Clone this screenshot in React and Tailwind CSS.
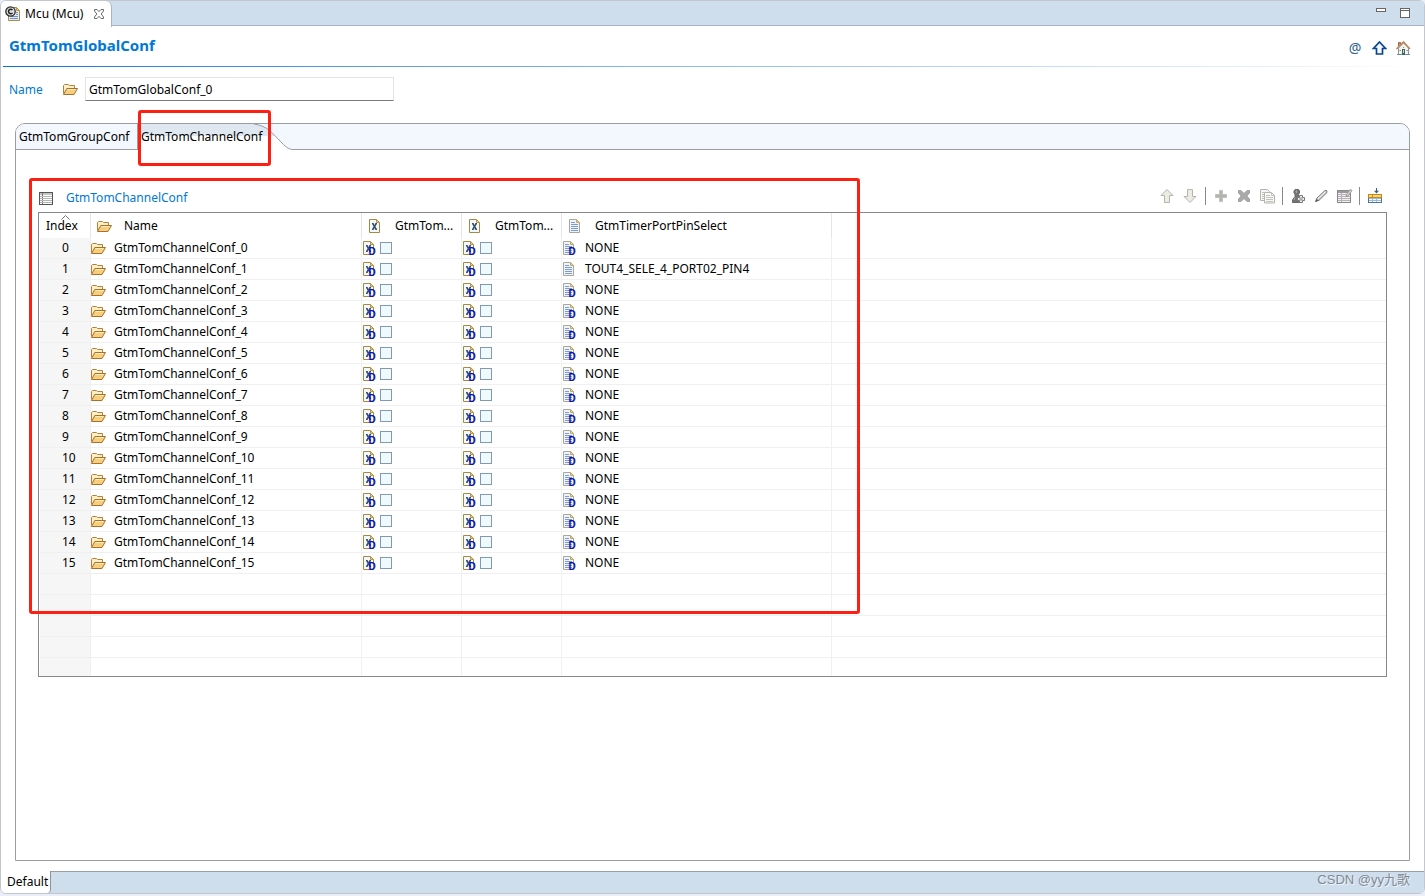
import React, { useState } from "react";

const Svg = ({ children }) => (
  <svg viewBox="0 0 16 16" className="size-4 shrink-0 overflow-visible" aria-hidden="true" fill="none">
    {children}
  </svg>
);

const FolderIcon = () => (
  <Svg>
    <path d="M0.5 12.500V4.500L1.500 3.500H5.500L6.500 4.500H11.500V7" fill="#fdf0c4" stroke="#b5803c" />
    <path d="M0.5 13.500L3.800 7.500H14.500L11 13.500Z" fill="#f6ce7c" stroke="#a9702c" />
    <path d="M4.500 8.500H12.500" stroke="#fdeec0" />
  </Svg>
);

const Badge = () => (
  <text x="6.500" y="15" fontSize="10" fontWeight="700" fontFamily="Liberation Sans, sans-serif" fill="#0a12b4">
    D
  </text>
);

const BoolIcon = ({ badge = false }) => (
  <Svg>
    <path d="M1.5 1.5H8.5L11.500 4.5V14.5H1.5Z" fill="#f3f8fd" stroke="#a8893f" />
    <path d="M8.5 1.5V4.5H11.500Z" fill="#e9c983" stroke="#b9964a" />
    <path d="M4.700 5.500L8.300 11.500M8.300 5.500L4.700 11.500" stroke="#34506e" strokeWidth="1.500" />
    <path d="M4 5.500H5.500M7.500 5.500H9M4 11.500H5.500M7.500 11.500H9" stroke="#34506e" />
    {badge && <Badge />}
  </Svg>
);

const DocIcon = ({ badge = false }) => (
  <Svg>
    <path d="M1.5 1.5H8.5L11.500 4.5V14.5H1.5Z" fill="#eef4fc" stroke="#a9a898" />
    <path d="M8.5 1.5V4.5H11.500Z" fill="#e9cf98" stroke="#c5a76b" />
    <path d="M3 4.500H7M3 6.500H10M3 8.500H10M3 10.500H10M3 12.500H10" stroke="#7f9cc9" />
    {badge && <Badge />}
  </Svg>
);

const EditorIcon = () => (
  <Svg>
    <path d="M4.5 1.5H11.5L14.5 4.5V14.5H3.5V9" fill="#e4edf9" stroke="#b08a3c" />
    <path d="M11.5 1.5V4.5H14.5Z" fill="#e9c983" stroke="#b9964a" />
    <path d="M5 12.5H13M6 10.5H13M11 8.5H13M11 6.5H13" stroke="#6d8fc6" />
    <circle cx="5.500" cy="5.500" r="4.700" fill="#dcdcdc" stroke="#2b2b2b" strokeWidth="1.300" />
    <path d="M7.500 4C5.800 2.400 3.500 3.600 3.500 5.500C3.500 7.400 5.800 8.600 7.500 7" stroke="#222" strokeWidth="1.500" />
  </Svg>
);

const CloseIcon = () => (
  <svg viewBox="0 0 12 12" className="size-3" fill="none" aria-hidden="true">
    <path d="M1.5 1.5H4L6 3.7L8 1.5H10.5V3L8.2 6L10.5 9V10.5H8L6 8.3L4 10.5H1.5V9L3.8 6L1.5 3Z" stroke="#6a6a6a" />
  </svg>
);

const HomeIcon = () => (
  <Svg>
    <path d="M3.5 8V14.5H13.5V8L8.5 3Z" fill="#f6f4e4" stroke="#8698a8" />
    <path d="M3.5 6V2.5H5.5V4" fill="#c98b62" stroke="#9d6a45" />
    <path d="M1.5 9L8.5 2L15 9" stroke="#b98a62" strokeWidth="1.6" />
    <rect x="7" y="9" width="3" height="6" fill="#35608c" />
    <path d="M8 7.5H9M4.5 10.5H6M11.5 10.5H13" stroke="#6b93b8" />
    <path d="M8.5 10V13" stroke="#e9dd5b" />
    <path d="M2 14.5H6M11 14.5H15" stroke="#6b8f7c" />
  </Svg>
);

const UpIcon = () => (
  <Svg>
    <path d="M8.500 2L14.500 8.500H11.500V14H5.500V8.500H2.500Z" fill="#f4f9ff" stroke="#0a4591" strokeWidth="1.700" />
  </Svg>
);

const ListIcon = () => (
  <Svg>
    <rect x="1.5" y="2.5" width="13" height="12" fill="#fff" stroke="#555" />
    <path d="M2 4H14" stroke="#8a8a8a" />
    <path d="M4.5 3V14" stroke="#777" />
    <path d="M2 6.5H14M2 8.5H14M2 10.5H14M2 12.5H14" stroke="#b5b5b5" />
  </Svg>
);

const ArrowUp = () => (
  <Svg>
    <path d="M8 1.5L14 7.5H10.5V14.5H5.5V7.5H2Z" fill="#ecebe4" stroke="#b7b4aa" strokeLinejoin="round" />
  </Svg>
);
const ArrowDown = () => (
  <Svg>
    <path d="M8 14.5L14 8.5H10.5V1.5H5.5V8.5H2Z" fill="#ecebe4" stroke="#b7b4aa" strokeLinejoin="round" />
  </Svg>
);
const PlusIcon = () => (
  <Svg>
    <path d="M6.5 2.5H9.5V6.5H13.5V9.5H9.5V13.5H6.5V9.5H2.5V6.5H6.5Z" fill="#b3b4ae" stroke="#c0c1bb" />
  </Svg>
);
const CrossIcon = () => (
  <Svg>
    <path d="M2.5 2.5H5L8 5.5L11 2.5H13.5V5L10.8 8L13.5 11V13.5H11L8 10.5L5 13.5H2.5V11L5.2 8L2.5 5Z" fill="#a9a9a9" stroke="#a0a0a0" />
  </Svg>
);
const CopyIcon = () => (
  <Svg>
    <path d="M1.5 1.5H8.5L10.5 3.5V12.5H1.5Z" fill="#f7f7f4" stroke="#b5b4ae" />
    <path d="M5.5 4.5H12.5L15.5 7.5V15H5.5Z" fill="#f9f9f7" stroke="#b5b4ae" />
    <path d="M12.5 4.5V7.5H15.5M7 7.5H11M7 9.5H14M7 11.5H14M7 13.5H14M3 4.5H5M3 6.5H5M3 8.5H5M3 10.5H5" stroke="#c1c1bd" />
  </Svg>
);
const PawnIcon = () => (
  <Svg>
    <path d="M5 1.5H8.5L9.5 3V5L8.5 6.5V8L10 11V14.5H2.5V12L5 8.5V6.5L4 5V3Z" fill="#747474" stroke="#666" />
    <path d="M5.5 3L6.5 2.5V5M5 9.5L4 12" stroke="#aaa" />
    <path d="M9.5 7.5H12.5V9.5H14.5V12.5H12.5V14.5H9.5V12.5H7.5V9.5H9.5Z" fill="#ededed" stroke="#777" />
    <path d="M11 9V13M9 11H13" stroke="#999" />
  </Svg>
);
const PenIcon = () => (
  <Svg>
    <path d="M2.5 13.5L4 10L12 2.5Q14.5 1.8 14 4.5L6 12.3Z" fill="#cfcfcf" stroke="#777" />
    <path d="M4.5 11L12.5 3.5" stroke="#f4f4f4" />
    <path d="M2 14L5.5 12.5L4 11Z" fill="#555" />
  </Svg>
);
const TableEditIcon = () => (
  <Svg>
    <rect x="1.5" y="2.5" width="13" height="12" fill="#f2eff2" stroke="#8c878c" />
    <path d="M2 4H14" stroke="#9d999d" strokeWidth="2" />
    <path d="M2 6.5H14M2 8.5H14M2 10.5H14M2 12.5H14M5.5 5V14" stroke="#b6b1b6" />
    <path d="M10 8.5L10.5 6.5L14 1.5L16 2.5L12 8Z" fill="#d8d6d0" stroke="#9a9790" />
  </Svg>
);
const InsertIcon = () => (
  <Svg>
    <rect x="1.5" y="7.5" width="13" height="7" fill="#fff" stroke="#4b74a3" />
    <path d="M2 10.5H14M2 12.5H14M5.5 9V14M9.5 9V14" stroke="#9dbad6" />
    <rect x="1.5" y="6.5" width="13" height="3" fill="#f8d487" stroke="#c98810" />
    <path d="M5.5 7V9" stroke="#c98810" />
    <path d="M9.5 0V3" stroke="#3c5f7c" />
    <path d="M7 2.8H12L9.5 5.5Z" fill="#3c5f7c" />
  </Svg>
);

const toolbar = [
  ["Move up", ArrowUp],
  ["Move down", ArrowDown],
  null,
  ["Add", PlusIcon],
  ["Delete", CrossIcon],
  ["Duplicate", CopyIcon],
  null,
  ["Add custom", PawnIcon],
  ["Edit", PenIcon],
  ["Edit table", TableEditIcon],
  null,
  ["Insert columns", InsertIcon],
];

const rows = Array.from({ length: 16 }, (_, i) => ({
  name: `GtmTomChannelConf_${i}`,
  pin: i === 1 ? "TOUT4_SELE_4_PORT02_PIN4" : "NONE",
}));

const cell = "h-[21px] border-r border-b border-[#f0f0f0] p-0 whitespace-nowrap";
const head = "h-[25px] border-r border-[#e5e5e5] p-0 text-left font-normal whitespace-nowrap";
const headInner = "flex items-center gap-[11px] pl-1.5";

const FlagCell = ({ label }) => {
  const [on, setOn] = useState(false);
  return (
    <td className={cell}>
      <div className="flex items-center gap-0.5">
        <BoolIcon badge />
        <input
          type="checkbox"
          aria-label={label}
          checked={on}
          onChange={() => setOn(!on)}
          className="size-3 appearance-none border border-[#8299b3] bg-[#eefafe] checked:bg-[#4a7db5]"
        />
      </div>
    </td>
  );
};

function ChannelTable() {
  return (
    <div className="h-[465px] overflow-hidden border border-[#828790] pl-px">
      <table className="w-full table-fixed border-separate border-spacing-0">
        <colgroup>
          <col className="w-[51px]" />
          <col className="w-[271px]" />
          <col className="w-[100px]" />
          <col className="w-[100px]" />
          <col className="w-[270px]" />
          <col />
        </colgroup>
        <thead>
          <tr>
            <th className={`${head} relative pl-1.5`}>
              <svg viewBox="0 0 9 5" className="absolute top-0.5 left-[21px] h-[5px] w-[9px]" fill="none" aria-hidden="true">
                <path d="M0.5 4.5L4.5 0.5L8.5 4.5" stroke="#777" />
              </svg>
              Index
            </th>
            <th className={head}>
              <div className={headInner}><FolderIcon />Name</div>
            </th>
            <th className={head}>
              <div className={headInner}><BoolIcon />GtmTom...</div>
            </th>
            <th className={head}>
              <div className={headInner}><BoolIcon />GtmTom...</div>
            </th>
            <th className={head}>
              <div className={headInner}><DocIcon />GtmTimerPortPinSelect</div>
            </th>
            <td />
          </tr>
        </thead>
        <tbody>
          {rows.map((r, i) => (
            <tr key={r.name}>
              <td className={`${cell} bg-[#f6f6f6] pl-[22px]`}>{i}</td>
              <td className={cell}>
                <div className="flex items-center gap-[7px]"><FolderIcon />{r.name}</div>
              </td>
              <FlagCell label={`${r.name} first flag`} />
              <FlagCell label={`${r.name} second flag`} />
              <td className={cell}>
                <div className="flex items-center gap-[7px]"><DocIcon badge={r.pin === "NONE"} />{r.pin}</div>
              </td>
              <td className="border-b border-[#f0f0f0]" />
            </tr>
          ))}
          {[0, 1, 2, 3, 4].map((i) => (
            <tr key={i}>
              <td className={`${cell} bg-[#f6f6f6]`} />
              <td className={cell} />
              <td className={cell} />
              <td className={cell} />
              <td className={cell} />
              <td className="border-b border-[#f0f0f0]" />
            </tr>
          ))}
        </tbody>
      </table>
    </div>
  );
}

export default function App() {
  const [name, setName] = useState("GtmTomGlobalConf_0");
  return (
    <div className="flex min-h-screen flex-col bg-[#e9eef8] pb-0.5 font-['Noto_Sans','Noto_Sans_CJK_SC',sans-serif] text-xs leading-5 text-black">
      <div className="flex flex-1 flex-col overflow-hidden rounded-md border border-[#c3c7cd] bg-white">
        <header className="flex h-[25px] items-stretch bg-[#cfdeed]">
          <div className="-mb-px flex items-center rounded-tr-md border-r border-[#a9b5c6] bg-white pr-1.5 pl-1">
            <EditorIcon />
            <span className="pl-1 whitespace-nowrap">Mcu (Mcu)</span>
            <button type="button" aria-label="Close" className="ml-2.5"><CloseIcon /></button>
          </div>
          <div className="flex flex-1 items-start justify-end gap-3.5 border-b border-[#a9b5c6] pt-[7px] pr-3.5">
            <button type="button" aria-label="Minimize" className="h-1 w-2.5 border border-[#666] bg-white" />
            <button type="button" aria-label="Maximize" className="flex h-2.5 w-2.5 items-start border border-[#666] bg-white">
              <span className="block h-0.5 w-full border-b border-[#666]" />
            </button>
          </div>
        </header>

        <div className="flex h-10 items-center justify-between pr-[13px] pl-2">
          <h1 className="pb-0.5 text-[15px] font-bold text-[#0078d7]">GtmTomGlobalConf</h1>
          <div className="flex items-center gap-2 pt-1">
            <button type="button" aria-label="Annotations" className="w-4 text-center text-sm leading-4 text-[#2b628f]">@</button>
            <button type="button" aria-label="Up"><UpIcon /></button>
            <button type="button" aria-label="Home"><HomeIcon /></button>
          </div>
        </div>
        <div className="ml-0.5 h-px bg-linear-to-r from-[#0078d7] to-white" />

        <div className="flex items-center pt-2.5 pl-2">
          <label htmlFor="conf-name" className="w-[54px] pt-0.5 text-[#0078d7]">Name</label>
          <FolderIcon />
          <input
            id="conf-name"
            value={name}
            onChange={(e) => setName(e.target.value)}
            className="ml-1.5 h-6 w-[309px] border border-[#e3e3e3] border-b-[#7a7a7a] px-[3px] outline-none"
          />
        </div>

        <main className="mx-3.5 mt-[22px] mb-2.5 flex flex-1 flex-col rounded-t-[10px] border border-[#9a9da2]">
          <div className="flex h-[26px] rounded-t-[9px] bg-[#f3f7fe]" role="tablist">
            <button type="button" role="tab" aria-selected="false" className="w-[122px] border-r border-b border-[#9a9da2] pl-[3px] text-left">
              GtmTomGroupConf
            </button>
            <div className="relative flex w-[155px]">
              <svg viewBox="0 0 155 26" className="absolute inset-0 h-[26px] w-[155px]" aria-hidden="true">
                <defs>
                  <linearGradient id="tab-fill" x1="0" y1="0" x2="0" y2="1">
                    <stop offset="0" stopColor="#dfe7f1" />
                    <stop offset="0.45" stopColor="#dfe7f1" />
                    <stop offset="0.45" stopColor="#ffffff" />
                    <stop offset="1" stopColor="#ffffff" />
                  </linearGradient>
                </defs>
                <path d="M0 0H116C130 2 134 9 142 17C147 22 150 25.500 155 25.500V26H0Z" fill="url(#tab-fill)" />
                <path d="M116 0C130 2 134 9 142 17C147 22 150 25.500 155 25.500" fill="none" stroke="#9a9da2" />
              </svg>
              <button type="button" role="tab" aria-selected="true" className="relative pl-[3px] whitespace-nowrap">
                GtmTomChannelConf
              </button>
              <div className="pointer-events-none absolute -top-3.5 left-0 h-14 w-[133px] rounded-[3px] border-3 border-[#fd2012]" />
            </div>
            <div className="flex-1 border-b border-[#9a9da2]" />
          </div>

          <section className="relative px-[22px] pt-[35px]">
            <div className="flex h-[27px] items-start justify-between pr-1">
              <h2 className="flex items-center gap-3 pt-[3px] text-[#0078d7]"><ListIcon />GtmTomChannelConf</h2>
              <div className="flex items-center gap-[7px] pt-0.5">
                {toolbar.map((t, i) => {
                  if (!t) return <span key={i} className="h-[18px] w-px bg-[#8a8a8a]" />;
                  const [label, Icon] = t;
                  return <button key={i} type="button" aria-label={label}><Icon /></button>;
                })}
              </div>
            </div>
            <ChannelTable />
            <div className="pointer-events-none absolute top-7 left-[13px] h-[436px] w-[831px] rounded-[3px] border-3 border-[#fd2012]" />
          </section>
        </main>

        <footer className="flex h-[22px] bg-[#cfdeed]">
          <button type="button" className="rounded-br border-r border-[#8c9097] bg-white pr-0.5 pl-1.5">Default</button>
          <div className="flex flex-1 items-center justify-end border-t border-[#9a9da2] pr-3.5 pb-[5px]">
            <span className="font-['Liberation_Sans','Noto_Sans_CJK_SC',sans-serif] text-[13px] text-[#808993] [text-shadow:1px_1px_0_#eef3f8]">CSDN @yy九歌</span>
          </div>
        </footer>
      </div>
    </div>
  );
}
